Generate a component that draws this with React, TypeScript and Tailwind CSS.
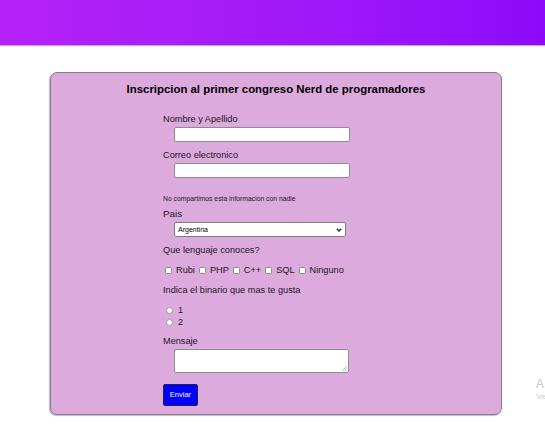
import React from "react";

function Check({ label }: { label: string }) {
  return (
    <span className="flex items-center">
      <span className="ml-[1px] mr-[4px] inline-block h-[7px] w-[7px] rounded-[1.5px] border border-[#8a8a8a] bg-white" />
      <span className="mr-[3px]">{label}</span>
    </span>
  );
}

function Radio({ label }: { label: string }) {
  return (
    <div className="flex h-[12px] items-center">
      <span className="ml-[3px] mr-[5px] inline-block h-[7px] w-[7px] rounded-full border border-[#9a9a9a] bg-white" />
      <span>{label}</span>
    </div>
  );
}

export default function App() {
  return (
    <div className="relative min-h-[424px] w-[545px] overflow-hidden bg-white font-['Liberation_Sans',Arial,sans-serif] text-[#1e161e]">
      <div className="h-[45px] w-full bg-gradient-to-r from-[#b621f8] to-[#8d09f9] shadow-[0_1px_1px_rgba(90,0,120,0.35)]" />
      <div className="ml-[50px] mt-[27px] w-[452px] rounded-[7px] border border-[#8c7a8e] bg-[#dcaadc] pb-[8px] pt-[9px] shadow-[-1px_1px_1px_rgba(80,60,80,0.35)]">
        <h1 className="text-center text-[11.4px] font-bold leading-[14px] text-black">
          Inscripcion al primer congreso Nerd de programadores
        </h1>
        <div className="flex flex-col pl-[112px] text-[9.2px] leading-[12px]">
          <label className="mt-[17px]">Nombre y Apellido</label>
          <div className="ml-[11px] mt-[2px] h-[15px] w-[176px] rounded-[2px] border border-[#8d8d8d] bg-white" />
          <label className="mt-[7px]">Correo electronico</label>
          <div className="ml-[11px] mt-[2px] h-[15px] w-[176px] rounded-[2px] border border-[#8d8d8d] bg-white" />
          <p className="mt-[16px] text-[6.8px] leading-[9px]">No compartimos esta informacion con nadie</p>
          <label className="mt-[5px] text-[9.8px]">Pais</label>
          <div className="ml-[11px] mt-[2px] flex h-[15px] w-[172px] items-center justify-between rounded-[2px] border border-[#7d7d7d] bg-white pl-[3px] pr-[3px] text-[7px] text-black">
            <span>Argentina</span>
            <svg width="6" height="4" viewBox="0 0 6 4">
              <path d="M0.8 0.8 L3 3 L5.2 0.8" fill="none" stroke="#222" strokeWidth="1.3" />
            </svg>
          </div>
          <label className="mt-[7px]">Que lenguaje conoces?</label>
          <div className="mt-[8px] flex h-[12px] items-center pl-[1px]">
            <Check label="Rubi" />
            <Check label="PHP" />
            <Check label="C++" />
            <Check label="SQL" />
            <Check label="Ninguno" />
          </div>
          <label className="mt-[8px]">Indica el binario que mas te gusta</label>
          <div className="mt-[8px]">
            <Radio label="1" />
            <Radio label="2" />
          </div>
          <label className="mt-[7px]">Mensaje</label>
          <div className="relative ml-[11px] mt-[2px] h-[24px] w-[175px] rounded-[2px] border border-[#8d8d8d] bg-white">
            <svg className="absolute bottom-[1px] right-[1px]" width="5" height="5" viewBox="0 0 5 5">
              <path d="M4.5 0.5 L0.5 4.5 M4.5 2.5 L2.5 4.5" stroke="#999" strokeWidth="0.8" />
            </svg>
          </div>
          <button className="mt-[11px] flex h-[22px] w-[35px] items-center justify-center rounded-[2px] border border-[#23234a] bg-[#0000ff] text-[7.5px] text-white">
            Enviar
          </button>
        </div>
      </div>
      <div className="absolute left-[536px] top-[377px] text-[12px] leading-[14px] text-[#c9c9c9]">A</div>
      <div className="absolute left-[536px] top-[392px] text-[8px] leading-[10px] text-[#cdcdcd]">Ve</div>
    </div>
  );
}
